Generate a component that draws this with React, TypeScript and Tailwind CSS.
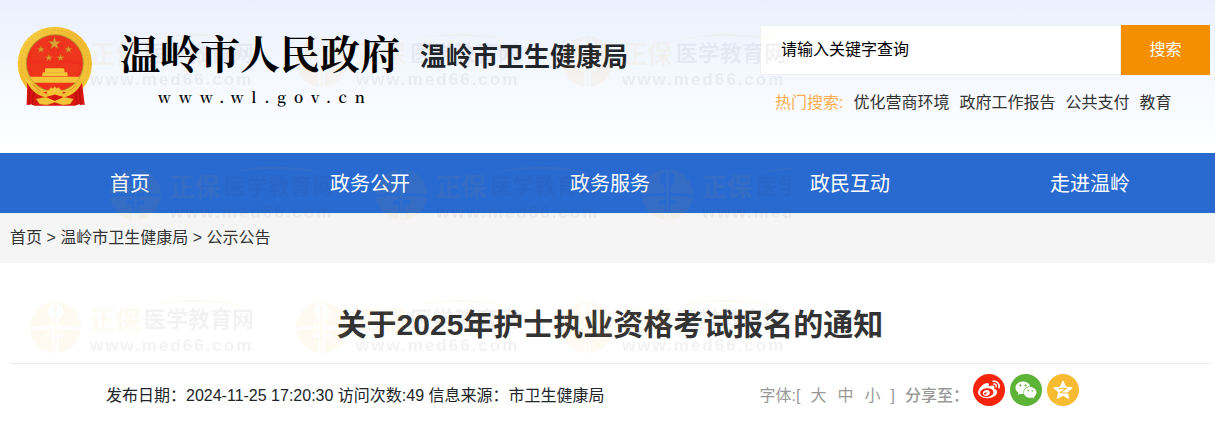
import React from "react";
import { FaWeibo, FaWeixin } from "react-icons/fa";

const navItems = ["首页", "政务公开", "政务服务", "政民互动", "走进温岭"];
const hotWords = ["优化营商环境", "政府工作报告", "公共支付", "教育"];

function starPoints(cx: number, cy: number, r: number, inner = 0.4): string {
  return Array.from({ length: 10 }, (_, i) => {
    const radius = i % 2 === 0 ? r : r * inner;
    const angle = (Math.PI / 5) * i - Math.PI / 2;
    return `${(cx + radius * Math.cos(angle)).toFixed(1)},${(cy + radius * Math.sin(angle)).toFixed(1)}`;
  }).join(" ");
}

function Emblem() {
  return (
    <svg viewBox="18 18 230 244" className="h-[81px] w-[77px] shrink-0" aria-hidden="true">
      <defs>
        <linearGradient id="gold" x1="0" y1="0" x2="1" y2="1">
          <stop offset="0" stopColor="#f7cf45" />
          <stop offset="0.5" stopColor="#efb92e" />
          <stop offset="1" stopColor="#f4c83c" />
        </linearGradient>
        <clipPath id="disc">
          <circle cx="134" cy="130" r="86" />
        </clipPath>
      </defs>
      <circle cx="134" cy="132" r="112" fill="url(#gold)" />
      <circle cx="134" cy="132" r="101" fill="none" stroke="#e3ab28" strokeWidth="2" strokeDasharray="5 6" />
      <circle cx="134" cy="130" r="87" fill="#b98a2c" />
      <circle cx="134" cy="130" r="84" fill="#ee2f1c" />
      <g fill="#d9a035" stroke="#b4711d" strokeWidth="1">
        <polygon points={starPoints(133, 71, 20)} />
        <polygon points={starPoints(92, 89, 11)} />
        <polygon points={starPoints(175, 89, 11)} />
        <polygon points={starPoints(116, 114, 11)} />
        <polygon points={starPoints(151, 114, 11)} />
      </g>
      <g fill="#f5c53a" clipPath="url(#disc)">
        <path d="M107 145h53l4 6h-61zM104 150h59v7h8l2 12H95l3-12h6z" />
        <path d="M40 171h190v18H40z" />
        <path d="M109 158h50v1h-50z" fill="#d48b20" />
      </g>
      <path
        d="M51 188l18 8 27 24 25-8h25l25 8 28-24 17-8 8 68-20-2-8 4H72l-8-4-15 2z"
        fill="#d81713"
      />
      <path d="M60 196l-4 60M72 208l-6 48M207 196l5 60M196 208l5 48" stroke="#b80d0c" strokeWidth="4" />
      <path
        d="M45 176q20 50 65 58l12-8q-42-8-62-42zM222 176q-20 50-65 58l-12-8q42-8 62-42z"
        fill="url(#gold)"
      />
      <path
        d="M117 210l5-7 7 3 5-6 5 6 7-3 5 7 7 3v12l-12 8q-12-8-24 0l-12-8v-12z"
        fill="#f4c338"
        stroke="#d59a20"
      />
      <path
        d="M78 238l30-6 26 11 26-11 30 6-10 15-22 3-24-8-24 8-22-3z"
        fill="#f4c338"
        stroke="#cf8c1c"
      />
      <path d="M108 232l26 11 26-11-26-8z" fill="#d81713" />
    </svg>
  );
}

function StarBadge() {
  return (
    <svg viewBox="0 0 32 32" className="size-5" aria-hidden="true" fill="none">
      <polygon points={starPoints(16, 17, 15, 0.46)} fill="#fff" stroke="#fff" strokeWidth="2" strokeLinejoin="round" />
      <path d="M9 14q7-1.500 12-.5L12 20q5 1.500 14 .5" stroke="#f6bb31" strokeWidth="1.800" />
    </svg>
  );
}

function WatermarkTile() {
  return (
    <div className="flex h-[133px] w-[266px] shrink-0 gap-[9px] pt-[36px]">
      <svg viewBox="0 0 52 52" className="size-[51px] shrink-0" fill="#f5a623">
        <defs>
          <mask id="cross">
            <rect width="52" height="52" fill="#fff" />
            <circle cx="26" cy="10" r="8" fill="#000" />
            <path d="M23 0h6v52h-6zM0 26q26-4 52 0v3q-26-3-52 0z" fill="#000" />
            <path d="M17 32h18v4H17z" fill="#000" />
          </mask>
        </defs>
        <circle cx="26" cy="26" r="26" mask="url(#cross)" />
        <path d="M24.500 0h3v52h-3z" opacity=".8" />
      </svg>
      <div className="pt-1">
        <div className="flex items-center gap-1 leading-7 font-bold whitespace-nowrap">
          <span className="text-[25px] text-[#f5a623]">正保</span>
          <span className="relative text-[22px] text-[#333344]">
            医学教育网
            <svg viewBox="0 0 110 12" className="absolute -top-2 left-0 h-3 w-[110px]">
              <path d="M0 9Q50-6 108 10Q50-2 0 9Z" fill="#f5a623" />
            </svg>
          </span>
        </div>
        <div className="text-[17px] leading-6 font-bold tracking-[2px] text-[#333344]">www.med66.com</div>
      </div>
    </div>
  );
}

function Watermark() {
  const tiles = [0, 1, 2].map((i) => <WatermarkTile key={i} />);
  return (
    <div
      aria-hidden="true"
      className="pointer-events-none absolute inset-y-0 left-0 w-[791px] overflow-hidden opacity-[0.06] select-none"
    >
      <div className="flex pl-[30px]">{tiles}</div>
      <div className="flex pl-[110px]">{tiles}</div>
      <div className="flex pl-[30px]">{tiles}</div>
    </div>
  );
}

export default function App() {
  return (
    <div className="relative overflow-hidden bg-white font-['Liberation_Sans','Noto_Sans_CJK_SC',sans-serif] text-base text-[#333]">
      <header className="flex h-[153px] items-start justify-between bg-linear-to-b from-[#eaf1fe] to-white pr-[5px] pl-4">
        <div className="flex pt-[26px]">
          <Emblem />
          <div className="ml-[27px] text-black">
            <div className="font-['Liberation_Serif','Noto_Serif_CJK_SC','Noto_Sans_CJK_SC',serif] text-[40px] leading-[60px] font-bold whitespace-nowrap">
              温岭市人民政府
            </div>
            <div className="pl-[38px] font-['Noto_Serif_CJK_SC','Liberation_Serif',serif] text-[15px] leading-[22px] font-semibold tracking-[8px]">
              www.wl.gov.cn
            </div>
          </div>
          <h2 className="ml-5 text-[26px] leading-[62px] font-bold whitespace-nowrap text-[#212529]">
            温岭市卫生健康局
          </h2>
        </div>
        <div className="w-[450px] pt-[25px]">
          <form className="flex h-[50px]" onSubmit={(e) => e.preventDefault()}>
            <input
              type="text"
              aria-label="关键字"
              placeholder="请输入关键字查询"
              className="min-w-0 flex-1 border border-[#f0f0f0] bg-white px-5 placeholder:text-black"
            />
            <button type="submit" className="w-[89px] bg-[#f38f00] text-white">
              搜索
            </button>
          </form>
          <div className="flex gap-2.5 pt-4 pl-[15px] leading-6 whitespace-nowrap">
            <span className="text-[#f8ad4f]">热门搜索:</span>
            {hotWords.map((word) => (
              <a key={word} href="#">
                {word}
              </a>
            ))}
          </div>
        </div>
      </header>

      <nav className="bg-[#296ad0] pr-[5px] pl-2.5">
        <ul className="grid h-[60px] grid-cols-5 text-center text-xl leading-[62px] text-white">
          {navItems.map((item) => (
            <li key={item}>
              <a href="#">{item}</a>
            </li>
          ))}
        </ul>
      </nav>

      <div className="bg-[#f5f5f5] px-2.5 leading-[50px]">
        <a href="#">首页</a> &gt; <a href="#">温岭市卫生健康局</a> &gt; <a href="#">公示公告</a>
      </div>

      <main className="pr-[5px] pl-2.5">
        <h1 className="border-b border-[#ebebeb] pt-[42px] pb-[18px] text-center text-[30px] leading-10 font-bold">
          关于2025年护士执业资格考试报名的通知
        </h1>
        <div className="flex h-16 items-center justify-between pr-[131px] pl-24 whitespace-nowrap">
          <p className="text-[#212529]">发布日期：2024-11-25 17:20:30 访问次数:49 信息来源：市卫生健康局</p>
          <div className="flex items-center text-[#999]">
            <span>字体:[</span>
            <div className="flex gap-[11px] px-2.5">
              <button type="button">大</button>
              <button type="button">中</button>
              <button type="button">小</button>
            </div>
            <span>]</span>
            <span className="ml-2.5 font-medium">分享至：</span>
            <div className="mb-3 flex gap-[5px] pl-1 text-white">
              <a href="#" aria-label="微博" className="flex size-8 items-center justify-center rounded-full bg-[#f7240c]">
                <FaWeibo size={22} />
              </a>
              <a href="#" aria-label="微信" className="flex size-8 items-center justify-center rounded-full bg-[#5cb336]">
                <FaWeixin size={22} />
              </a>
              <a href="#" aria-label="QQ空间" className="flex size-8 items-center justify-center rounded-full bg-[#f6bb31]">
                <StarBadge />
              </a>
            </div>
          </div>
        </div>
      </main>
      <Watermark />
    </div>
  );
}
